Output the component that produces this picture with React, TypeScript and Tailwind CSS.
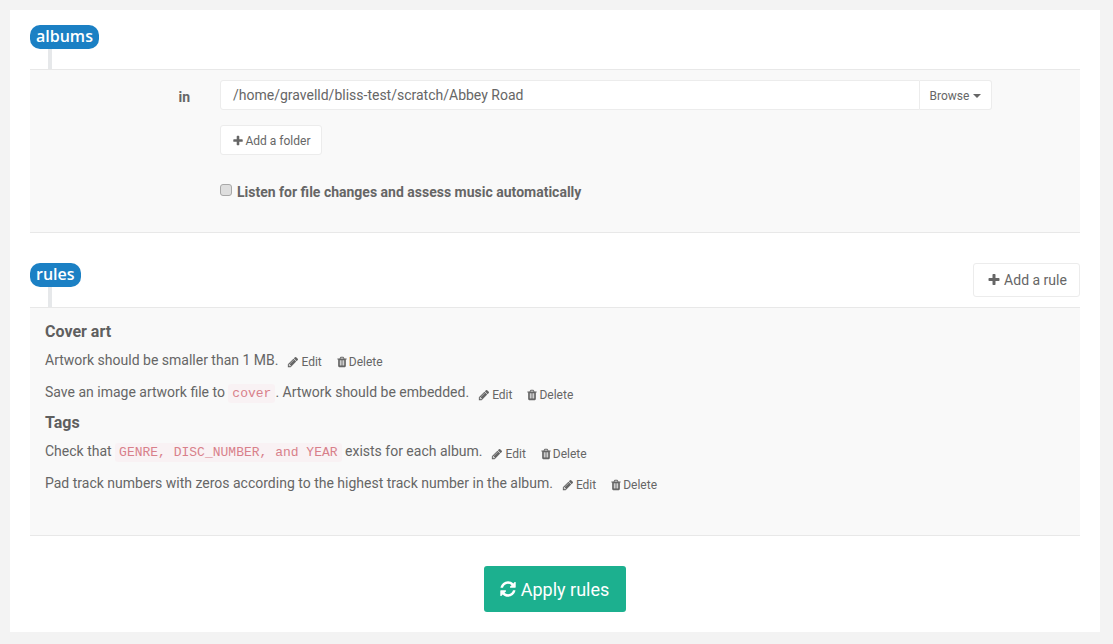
import type { ReactNode } from "react";

const plusPath =
  "M1600 736v192q0 40-28 68t-68 28h-416v416q0 40-28 68t-68 28h-192q-40 0-68-28t-28-68v-416h-416q-40 0-68-28t-28-68v-192q0-40 28-68t68-28h416v-416q0-40 28-68t68-28h192q40 0 68 28t28 68v416h416q40 0 68 28t28 68z";
const pencilPath =
  "M491 1536l91-91-235-235-91 91v107h128v128h107zm523-928q0-22-22-22-10 0-17 7l-542 542q-7 7-7 17 0 22 22 22 10 0 17-7l542-542q7-7 7-17zm-54-192l416 416-832 832h-416v-416zm683 96q0 53-37 90l-166 166-416-416 166-165q36-38 90-38 53 0 91 38l235 234q37 39 37 91z";
const trashPath =
  "M704 1376v-704q0-14-9-23t-23-9h-64q-14 0-23 9t-9 23v704q0 14 9 23t23 9h64q14 0 23-9t9-23zm256 0v-704q0-14-9-23t-23-9h-64q-14 0-23 9t-9 23v704q0 14 9 23t23 9h64q14 0 23-9t9-23zm256 0v-704q0-14-9-23t-23-9h-64q-14 0-23 9t-9 23v704q0 14 9 23t23 9h64q14 0 23-9t9-23zm-544-992h448l-48-117q-7-9-17-11h-317q-10 2-17 11zm928 32v64q0 14-9 23t-23 9h-96v948q0 83-47 143.500t-113 60.500h-832q-66 0-113-58.500t-47-141.500v-952h-96q-14 0-23-9t-9-23v-64q0-14 9-23t23-9h309l70-167q15-37 54-63t79-26h320q40 0 79 26t54 63l70 167h309q14 0 23 9t9 23z";
const refreshPath =
  "M1639 1056q0 5-1 7-64 268-268 434.500t-478 166.500q-146 0-282.500-55t-243.500-157l-129 129q-19 19-45 19t-45-19-19-45v-448q0-26 19-45t45-19h448q26 0 45 19t19 45-19 45l-137 137q71 66 161 102t187 36q134 0 250-65t186-179q11-17 53-117 8-23 30-23h192q13 0 22.500 9.500t9.500 22.500zm25-800v448q0 26-19 45t-45 19h-448q-26 0-45-19t-19-45 19-45l138-138q-148-137-349-137-134 0-250 65t-186 179q-11 17-53 117-8 23-30 23h-199q-13 0-22.500-9.500t-9.500-22.500v-7q65-268 270-434.500t480-166.500q146 0 284 55.500t245 156.500l130-129q19-19 45-19t45 19 19 45z";

function Icon({ d, className }: { d: string; className: string }) {
  return (
    <svg viewBox="0 0 1792 1792" fill="currentColor" className={className}>
      <path d={d} />
    </svg>
  );
}

function SectionBadge({ label }: { label: string }) {
  return (
    <div className="flex flex-col items-start">
      <span className="flex h-[24px] items-center rounded-[10px] bg-[#1b80c4] px-[6px] pb-[2px] font-['Open_Sans',sans-serif] text-[16px] font-semibold text-white">
        {label}
      </span>
      <div className="ml-[18px] h-[20px] w-[4px] bg-[#e6e8ea]" />
    </div>
  );
}

function RuleActions() {
  return (
    <span className="ml-[9px] mt-[4px] inline-flex items-center text-[12px] text-[#666]">
      <span className="inline-flex items-center">
        <Icon d={pencilPath} className="mr-[2px] h-[12px] w-[12px]" />
        Edit
      </span>
      <span className="ml-[14px] inline-flex items-center">
        <Icon d={trashPath} className="mr-[1px] h-[12px] w-[12px]" />
        Delete
      </span>
    </span>
  );
}

function Code({ children }: { children: ReactNode }) {
  return (
    <code className="rounded-[3px] bg-[#f9f2f4] px-[4px] py-[2px] font-['Liberation_Mono',monospace] text-[13px] text-[#d8808a]">
      {children}
    </code>
  );
}

function Rule({ children, className }: { children: ReactNode; className: string }) {
  return (
    <div className={`flex h-[20px] items-center text-[14px] text-[#666] ${className}`}>
      <span className="whitespace-pre">{children}</span>
      <RuleActions />
    </div>
  );
}

export default function App() {
  return (
    <div className="h-[644px] overflow-hidden bg-[#f3f3f3] pl-[10px] pr-[13px] pt-[10px] font-['Roboto',sans-serif]">
      <div className="h-[622px] bg-white px-[20px] pt-[15px]">
        <SectionBadge label="albums" />
        <div className="h-[164px] border-y border-[#e8e8e8] bg-[#f9f9f9] pt-[10px]">
          <div className="flex">
            <div className="w-[160px] pt-[7px] text-right text-[14px] font-bold text-[#666]">in</div>
            <div className="ml-[30px] w-[772px]">
              <div className="flex h-[30px]">
                <div className="flex w-[700px] items-center rounded-l-[3px] border border-[#ececec] bg-white pl-[12px] pt-[1px] text-[14px] text-[#666]">
                  /home/gravelld/bliss-test/scratch/Abbey Road
                </div>
                <div className="flex w-[72px] items-center justify-center rounded-r-[3px] border border-l-0 border-[#ececec] bg-white pt-[1px] text-[12px] text-[#666]">
                  Browse
                  <span className="ml-[4px] mt-[1px] border-x-[4px] border-t-[4px] border-x-transparent border-t-[#666]" />
                </div>
              </div>
              <div className="mt-[15px] flex h-[30px] w-[102px] items-center justify-center rounded-[3px] border border-[#ececec] bg-white pt-[1px] text-[12px] text-[#666]">
                <Icon d={plusPath} className="mr-[2px] h-[12px] w-[12px]" />
                Add a folder
              </div>
              <label className="mt-[29px] flex items-start text-[14px] font-bold leading-[16px] text-[#666]">
                <span className="h-[12px] w-[12px] rounded-[3px] border border-[#a8a8a8] bg-[#dedede]" />
                <span className="ml-[5px]">Listen for file changes and assess music automatically</span>
              </label>
            </div>
          </div>
        </div>

        <div className="mt-[30px] flex items-start justify-between">
          <SectionBadge label="rules" />
          <div className="flex h-[34px] w-[107px] items-center justify-center rounded-[3px] border border-[#ececec] bg-white pl-[1px] text-[14px] text-[#666]">
            <Icon d={plusPath} className="mr-[3px] h-[14px] w-[14px]" />
            Add a rule
          </div>
        </div>
        <div className="h-[229px] border-y border-[#e8e8e8] bg-[#f9f9f9] px-[15px] pt-[14px]">
          <h3 className="text-[16px] font-bold leading-[20px] text-[#5f5f5f]">Cover art</h3>
          <Rule className="mt-[8px]">Artwork should be smaller than 1 MB.</Rule>
          <Rule className="mt-[13px]">
            Save an image artwork file to <Code>cover</Code>. Artwork should be embedded.
          </Rule>
          <h3 className="mt-[10px] text-[16px] font-bold leading-[20px] text-[#5f5f5f]">Tags</h3>
          <Rule className="mt-[9px]">
            Check that <Code>GENRE, DISC_NUMBER, and YEAR</Code> exists for each album.
          </Rule>
          <Rule className="mt-[11px]">Pad track numbers with zeros according to the highest track number in the album.</Rule>
        </div>

        <div className="mt-[30px] flex justify-center">
          <button className="flex h-[46px] w-[142px] items-center justify-center rounded-[3px] bg-[#1cb08f] pr-[2px] text-[18px] text-white">
            <Icon d={refreshPath} className="mr-[4px] h-[18px] w-[18px]" />
            Apply rules
          </button>
        </div>
      </div>
    </div>
  );
}
